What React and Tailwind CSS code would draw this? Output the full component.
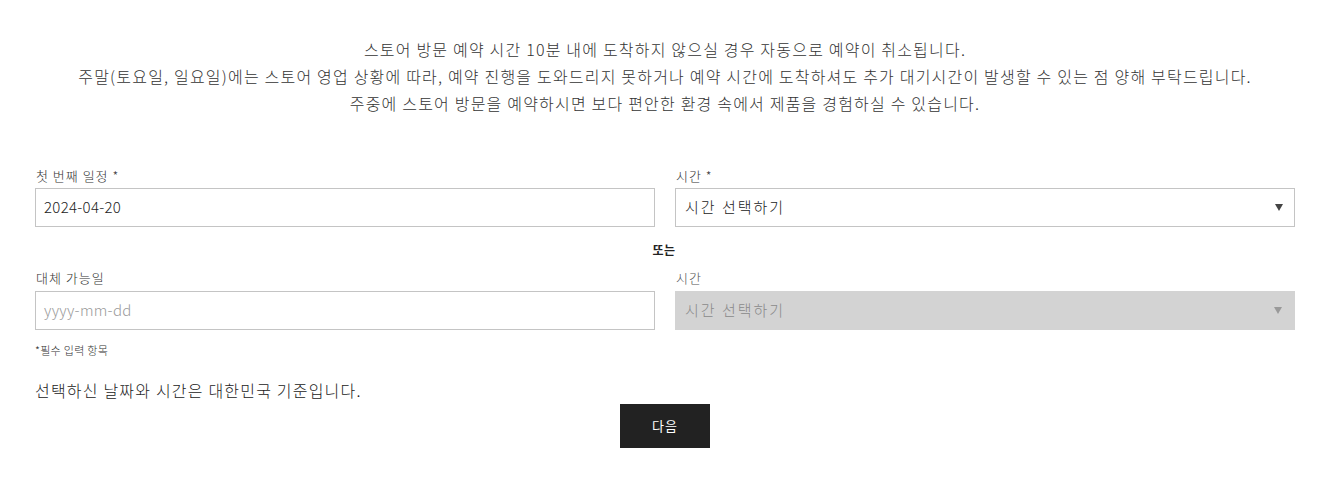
import React from 'react';

const font = { fontFamily: '"Noto Sans CJK KR", "Noto Sans", sans-serif' };

const Caret = ({ className }) => (
  <svg width="8" height="7" viewBox="0 0 8 7" className={className}>
    <path d="M0 0 L8 0 L4 7 Z" fill="currentColor" />
  </svg>
);

const App = () => {
  return (
    <div className="bg-white w-[1330px] h-[479px] px-[35px] pt-[36px] text-[#333] font-extralight" style={font}>
      {/* notice */}
      <div className="text-center text-[16px] leading-[27px] tracking-[1.2px] text-[#333]">
        <p>스토어 방문 예약 시간 10분 내에 도착하지 않으실 경우 자동으로 예약이 취소됩니다.</p>
        <p>주말(토요일, 일요일)에는 스토어 영업 상황에 따라, 예약 진행을 도와드리지 못하거나 예약 시간에 도착하셔도 추가 대기시간이 발생할 수 있는 점 양해 부탁드립니다.</p>
        <p>주중에 스토어 방문을 예약하시면 보다 편안한 환경 속에서 제품을 경험하실 수 있습니다.</p>
      </div>

      {/* form */}
      <div className="mt-[50px]">
        <div className="grid grid-cols-2 gap-x-[20px]">
          <div>
            <label className="block text-[13px] leading-[18px] tracking-[1px] mb-[3px] pl-[1px]">첫 번째 일정 *</label>
            <div className="h-[39px] border border-[#c4c4c4] flex items-center px-[8px] text-[15px] tracking-[0.3px] text-[#222]">2024-04-20</div>
          </div>
          <div>
            <label className="block text-[13px] leading-[18px] tracking-[1px] mb-[3px] pl-[1px]">시간 *</label>
            <div className="h-[39px] border border-[#c4c4c4] flex items-center justify-between px-[9px] text-[15px] text-[#222]">
              <span className="tracking-[2px]">시간 선택하기</span>
              <Caret className="text-[#444] mr-[2px]" />
            </div>
          </div>
        </div>

        <div className="text-center text-[12px] leading-[18px] font-bold text-[#222] mt-[14px] ml-[-2px] tracking-[0.5px]">또는</div>

        <div className="grid grid-cols-2 gap-x-[20px] mt-[10px]">
          <div>
            <label className="block text-[13px] leading-[18px] tracking-[1px] mb-[4px] pl-[1px]">대체 가능일</label>
            <div className="h-[39px] border border-[#c4c4c4] flex items-center px-[8px] text-[15px] tracking-[0.3px] text-[#9a9a9a]">yyyy-mm-dd</div>
          </div>
          <div>
            <label className="block text-[13px] leading-[18px] tracking-[1px] mb-[4px] pl-[1px] text-[#555]">시간</label>
            <div className="h-[39px] bg-[#d3d3d3] flex items-center justify-between px-[10px] text-[15px] text-[#8a8a8a]">
              <span className="tracking-[2px]">시간 선택하기</span>
              <Caret className="text-[#999] mr-[3px]" />
            </div>
          </div>
        </div>

        <p className="text-[11px] leading-[16px] tracking-[0.3px] mt-[12px] text-[#333]">*필수 입력 항목</p>
        <p className="text-[16px] leading-[22px] tracking-[1.2px] mt-[21px] text-[#222]">선택하신 날짜와 시간은 대한민국 기준입니다.</p>

        <div className="flex justify-center mt-[3px]">
          <button className="w-[90px] h-[44px] bg-[#222] text-white text-[13px] tracking-[1px] font-normal">다음</button>
        </div>
      </div>
    </div>
  );
};

export default App;
